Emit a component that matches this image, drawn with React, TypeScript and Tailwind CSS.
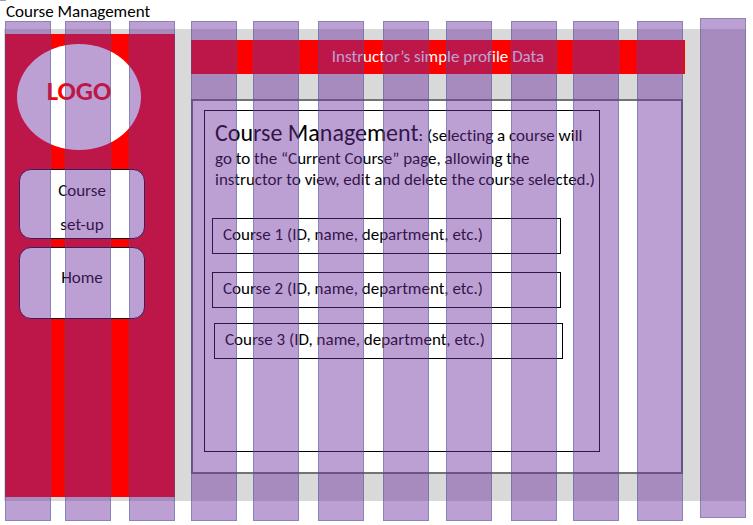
import React from "react";

const courses = [
  { id: 1, shift: "" },
  { id: 2, shift: "mt-[18px]" },
  { id: 3, shift: "mt-[15px] translate-x-0.5" },
];

const guides = [
  "col-start-1",
  "col-start-3",
  "col-start-5",
  "col-start-7",
  "col-start-9",
  "col-start-11",
  "col-start-13",
  "col-start-15",
  "col-start-17",
  "col-start-19",
  "col-start-21",
  "col-start-23 -mt-[3px] mb-[3px]",
];

function Sidebar() {
  return (
    <nav className="flex w-[170px] shrink-0 flex-col bg-[#ff0000] px-3.5 pt-2.5">
      <div className="-ml-0.5 flex h-[106px] w-[124px] items-center justify-center rounded-[50%] bg-white pb-3 text-[27px] font-bold text-[#ff0000]">
        LOGO
      </div>
      <button className="mt-[19px] flex h-[70px] w-[126px] flex-col items-center rounded-xl border border-[#101020] bg-white pt-1">
        <span className="leading-[34px]">Course</span>
        <span className="leading-[34px]">set-up</span>
      </button>
      <button className="mt-2 h-[72px] w-[126px] rounded-xl border border-[#101020] bg-white pb-2.5">
        Home
      </button>
    </nav>
  );
}

function CourseList() {
  return (
    <ul className="mt-7 -ml-[3px]">
      {courses.map((course) => (
        <li key={course.id} className={course.shift}>
          <a
            href={`#course-${course.id}`}
            className="flex h-9 w-[349px] items-center border border-black px-2.5 pb-0.5"
          >
            Course {course.id} (ID, name, department, etc.)
          </a>
        </li>
      ))}
    </ul>
  );
}

function GuideColumns() {
  return (
    <div
      aria-hidden="true"
      className="pointer-events-none absolute inset-x-0 top-[21px] grid h-[500px] grid-cols-[46fr_14fr_46fr_18fr_46fr_16fr_46fr_16fr_46fr_19fr_46fr_19fr_46fr_17fr_46fr_19fr_46fr_16fr_46fr_18fr_46fr_17fr_46fr] grid-rows-1 pr-[7px] pl-[5px]"
    >
      {guides.map((place) => (
        <div
          key={place}
          className={`row-start-1 border border-[#385d8a]/40 bg-[#7030a0]/46 ${place}`}
        />
      ))}
    </div>
  );
}

export default function App() {
  return (
    <div className="relative min-h-[525px] bg-white font-['Carlito','Calibri','Lato',sans-serif] text-[17px] leading-5 text-black [font-variant-ligatures:none]">
      <div className="absolute top-0 left-0 h-px w-1.5 bg-[#a0a0a0]" />
      <h1 className="px-1.5 pt-0.5 pb-[7px]">Course Management</h1>
      <div className="mr-[7px] ml-1 flex h-[472px] bg-[#d9d9d9] pt-[5px] pb-1 pl-px">
        <Sidebar />
        <main className="ml-4 flex min-w-0 flex-1 flex-col pt-1.5 pr-[61px]">
          <header className="flex h-[34px] items-center justify-center bg-[#ff0000] text-white">
            Instructor’s simple profile Data
          </header>
          <section className="mt-[25px] mr-0.5 h-[375px] border-2 border-[#747474] bg-white pt-[9px] pr-[81px] pl-[11px]">
            <div className="h-[342px] border border-black px-2.5 pt-1.5">
              <p className="whitespace-nowrap leading-[21px]">
                <span className="text-2xl leading-[31px]">Course Management</span>
                : (selecting a course will
                <br />
                go to the “Current Course” page, allowing the
                <br />
                instructor to view, edit and delete the course selected.)
              </p>
              <CourseList />
            </div>
          </section>
        </main>
      </div>
      <GuideColumns />
    </div>
  );
}
